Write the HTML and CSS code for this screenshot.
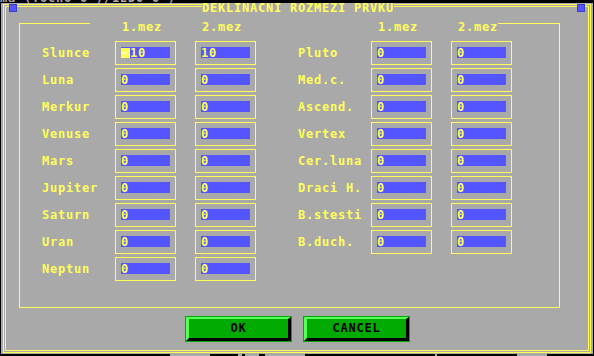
FILE: index.html
```html
<!DOCTYPE html>
<html>
<head>
<meta charset="utf-8">
<link rel="stylesheet" href="styles.css">
</head>
<body>
<div class="screen">
  <div class="topbar"><div class="topbar-text">ma (Tocno 0 )/1ED0 0 )</div></div>
  <div class="dialog">
    <div class="frame-outer">
      <div class="frame-inner">
        <div class="group">
          <div class="group-top">
            <span class="seg seg-l"></span>
            <span class="heads">    1.mez     2.mez                 1.mez     2.mez</span>
            <span class="seg seg-r"></span>
          </div>
          <div class="cols">
            <div class="block">
              <span class="lbl">Slunce</span><span class="fld"><span class="val"><span class="cur">-</span>10</span></span><span class="fld"><span class="val">10</span></span>
              <span class="lbl">Luna</span><span class="fld"><span class="val">0</span></span><span class="fld"><span class="val">0</span></span>
              <span class="lbl">Merkur</span><span class="fld"><span class="val">0</span></span><span class="fld"><span class="val">0</span></span>
              <span class="lbl">Venuse</span><span class="fld"><span class="val">0</span></span><span class="fld"><span class="val">0</span></span>
              <span class="lbl">Mars</span><span class="fld"><span class="val">0</span></span><span class="fld"><span class="val">0</span></span>
              <span class="lbl">Jupiter</span><span class="fld"><span class="val">0</span></span><span class="fld"><span class="val">0</span></span>
              <span class="lbl">Saturn</span><span class="fld"><span class="val">0</span></span><span class="fld"><span class="val">0</span></span>
              <span class="lbl">Uran</span><span class="fld"><span class="val">0</span></span><span class="fld"><span class="val">0</span></span>
              <span class="lbl">Neptun</span><span class="fld"><span class="val">0</span></span><span class="fld"><span class="val">0</span></span>
            </div>
            <div class="block">
              <span class="lbl">Pluto</span><span class="fld"><span class="val">0</span></span><span class="fld"><span class="val">0</span></span>
              <span class="lbl">Med.c.</span><span class="fld"><span class="val">0</span></span><span class="fld"><span class="val">0</span></span>
              <span class="lbl">Ascend.</span><span class="fld"><span class="val">0</span></span><span class="fld"><span class="val">0</span></span>
              <span class="lbl">Vertex</span><span class="fld"><span class="val">0</span></span><span class="fld"><span class="val">0</span></span>
              <span class="lbl">Cer.luna</span><span class="fld"><span class="val">0</span></span><span class="fld"><span class="val">0</span></span>
              <span class="lbl">Draci H.</span><span class="fld"><span class="val">0</span></span><span class="fld"><span class="val">0</span></span>
              <span class="lbl">B.stesti</span><span class="fld"><span class="val">0</span></span><span class="fld"><span class="val">0</span></span>
              <span class="lbl">B.duch.</span><span class="fld"><span class="val">0</span></span><span class="fld"><span class="val">0</span></span>
            </div>
          </div>
        </div>
        <div class="buttons">
          <div class="btn"><div class="btn-face">OK</div></div>
          <div class="btn"><div class="btn-face">CANCEL</div></div>
        </div>
      </div>
    </div>
    <div class="title">DEKLINACNI ROZMEZI PRVKU</div>
    <span class="sq sq-l"></span>
    <span class="sq sq-r"></span>
  </div>
  <div class="botbar">
    <span class="bb b1"></span><span class="bb b2"></span><span class="bb b3"></span><span class="bb b4"></span><span class="bb b5"></span><span class="bb b6"></span>
  </div>
</div>
</body>
</html>
```

FILE: styles.css
```css
* { box-sizing: border-box; }
html, body { margin: 0; padding: 0; background: #000; }
body {
  width: 594px;
  height: 356px;
  overflow: hidden;
  font-family: "DejaVu Sans Mono", "Liberation Mono", monospace;
  font-weight: bold;
  font-size: 12px;
  letter-spacing: 0.775px;
}
.screen { width: 594px; height: 356px; background: #000; }

.topbar { height: 3px; overflow: hidden; }
.topbar-text {
  margin-top: -8px;
  line-height: 12px;
  white-space: pre;
  color: #aaaaaa;
}

.dialog {
  position: relative;
  margin-left: 1px;
  width: 592px;
  height: 351px;
  background: #aaa9aa;
  padding: 1px 2px;
}
.frame-outer {
  border: 1px solid #ffff55;
  padding: 1px;
  height: 349px;
}
.frame-inner {
  border: 1px solid #ffff55;
  height: 345px;
  padding-top: 16px;
}

.group {
  margin-left: 13px;
  width: 541px;
  height: 285px;
  border: 1px solid #ffff55;
  border-top: none;
}
.group-top {
  display: flex;
  align-items: flex-start;
  height: 18px;
}
.seg { height: 1px; background: #ffff55; }
.seg-l { width: 70px; }
.seg-r { width: 61px; }
.heads {
  width: 408px;
  white-space: pre;
  color: #ffff55;
  line-height: 12px;
  margin-top: -2px;
  background: #aaa9aa;
}

.cols {
  display: flex;
  gap: 42px;
  padding-left: 22px;
}
.block {
  display: grid;
  grid-template-columns: 54px 61px 61px;
  grid-auto-rows: 24px;
  column-gap: 19px;
  row-gap: 3px;
}
.lbl {
  color: #ffff55;
  line-height: 25px;
  white-space: nowrap;
}
.fld {
  border: 1px solid #ffff55;
  padding: 5px 0 0 5px;
}
.val {
  display: block;
  width: 49px;
  height: 11px;
  background: #5555ff;
  color: #ffff55;
  line-height: 12px;
  white-space: nowrap;
}
.cur {
  display: inline-block;
  width: 9px;
  height: 10px;
  margin-top: 1px;
  vertical-align: top;
  line-height: 11px;
  background: #ffff55;
  color: #ffffff;
}

.buttons {
  display: flex;
  justify-content: center;
  gap: 11px;
  margin-top: 8px;
}
.btn {
  width: 107px;
  height: 26px;
  border: 1px solid #00aa00;
}
.btn-face {
  height: 100%;
  background: #00aa00;
  border-style: solid;
  border-width: 2px 3px 3px 3px;
  border-color: #55ff55 #000000 #000000 #55ff55;
  color: #000;
  text-align: center;
  line-height: 19px;
  padding-left: 1px;
}

.title {
  position: absolute;
  left: 201px;
  top: 0;
  width: 192px;
  height: 10px;
  background: #aaa9aa;
  color: #ffff55;
  line-height: 10px;
  white-space: pre;
}
.sq {
  position: absolute;
  top: 1px;
  width: 8px;
  height: 8px;
  background: #5555ff;
  border: 1px solid #3c3cc8;
}
.sq-l { left: 8px; }
.sq-r { left: 576px; }

.botbar { display: flex; height: 2px; }
.bb { height: 2px; background: #aaaaaa; }
.b1 { width: 40px; margin-left: 170px; }
.b2 { width: 4px; margin-left: 28px; }
.b3 { width: 14px; margin-left: 3px; }
.b4 { width: 40px; margin-left: 6px; }
.b5 { width: 2px; margin-left: 130px; }
.b6 { width: 30px; margin-left: 80px; }
```
